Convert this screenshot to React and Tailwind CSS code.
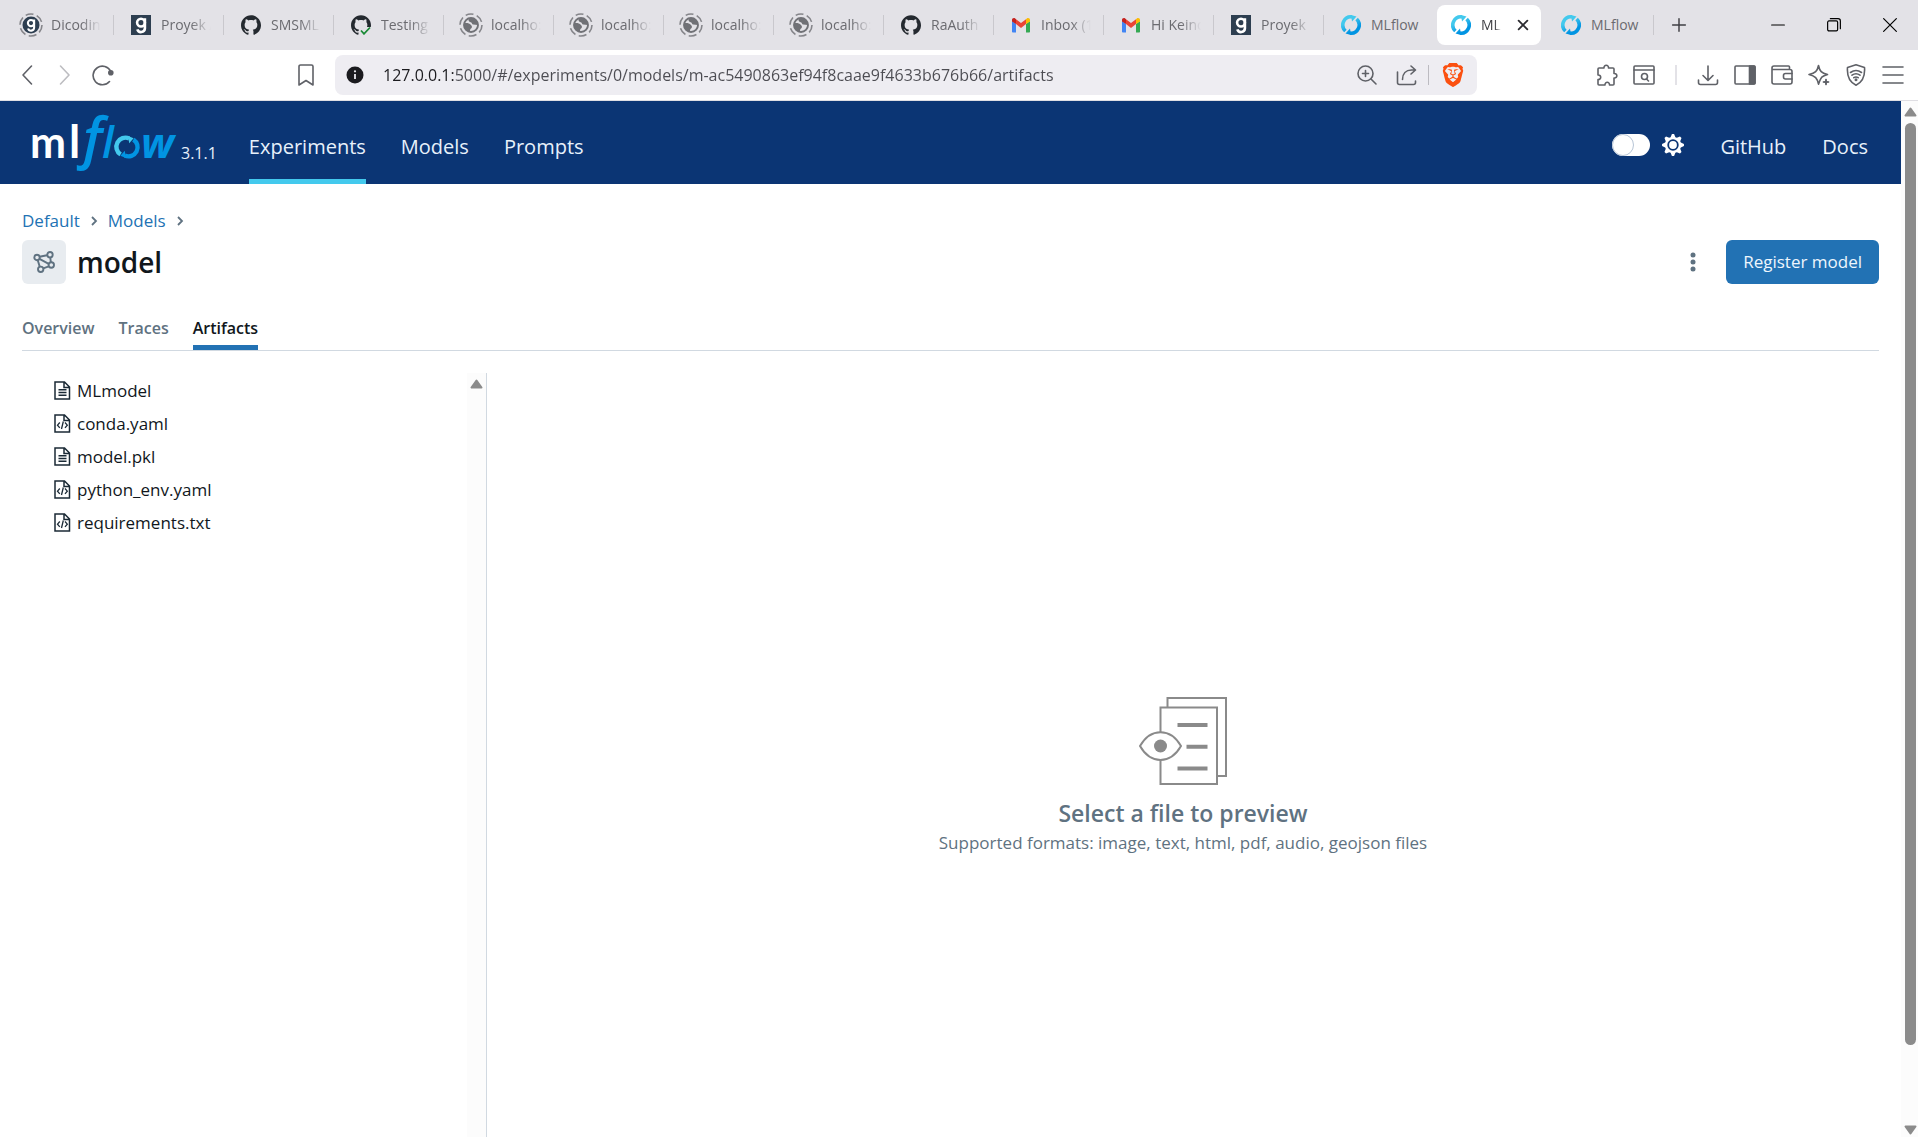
import React, { useId } from "react";
import { SiBrave, SiGithub } from "react-icons/si";

/* ---------- browser tab icons ---------- */

const LoadingRing = () => (
  <circle cx="12" cy="12" r="11" fill="none" stroke="#85858a" strokeWidth="1.6" strokeDasharray="8 3.5" />
);

function DicodingMark() {
  return (
    <g fill="none" stroke="#fff" strokeWidth="2.6">
      <circle cx="10" cy="7.6" r="3.9" />
      <path d="M13.9 3.2v10.2a3.9 3.9 0 0 1-7.6 1" />
    </g>
  );
}

function DicodingIcon() {
  return (
    <svg viewBox="0 0 20 20" className="size-5" aria-hidden="true">
      <rect width="20" height="20" fill="#2d3e50" />
      <DicodingMark />
    </svg>
  );
}

function DicodingLoadingIcon() {
  return (
    <svg viewBox="0 0 24 24" className="size-6" aria-hidden="true">
      <LoadingRing />
      <circle cx="12" cy="12" r="8.5" fill="#2d3e50" />
      <g transform="translate(4 4) scale(0.8)">
        <DicodingMark />
      </g>
    </svg>
  );
}

function GlobeLoadingIcon() {
  return (
    <svg viewBox="0 0 24 24" className="size-6" aria-hidden="true">
      <LoadingRing />
      <circle cx="12" cy="12" r="7" fill="none" stroke="#707176" strokeWidth="1.9" />
      <path d="M11 5c-2.4 1.8-1.6 3.6.8 4.200 1.600.4.800 2 2.400 2.400 1.600.3 3 .2 4.600.3A6.900 6.900 0 0 0 11 5z" fill="#707176" />
      <path d="M5.200 10.500c2-.9 5-.2 6.800 1.400 1.500 1.300 1 2.900 0 3.600-.9.700-.9 1.600-1.200 3.300A7 7 0 0 1 5.200 10.500z" fill="#707176" />
    </svg>
  );
}

const GithubIcon = () => <SiGithub className="size-5 text-[#24292f]" aria-hidden="true" />;

function GithubCheckIcon() {
  return (
    <svg viewBox="0 0 20 20" className="size-5" aria-hidden="true">
      <SiGithub size={20} color="#24292f" />
      <path d="M8 20l2-8h10v8z" fill="#e3e2e7" />
      <path d="M10 15.500l3 3.300 6-6.300" fill="none" stroke="#1a8a36" strokeWidth="1.800" />
    </svg>
  );
}

function GmailIcon() {
  return (
    <svg viewBox="0 0 20 16" className="h-4 w-5" aria-hidden="true">
      <path d="M1 4v10.500c0 .6.500 1 1 1h3V7z" fill="#4285f4" />
      <path d="M19 4v10.500c0 .6-.500 1-1 1h-3V7z" fill="#34a853" />
      <path d="M15 7V2.200l.8-.6C17.200.500 19 1.400 19 3v1.500z" fill="#fbbc04" />
      <path d="M5 7V2.200l-.8-.6C2.800.500 1 1.400 1 3v1.500z" fill="#c5221f" />
      <path d="M5 7V2.200l5 3.900 5-3.900V7l-5 4z" fill="#ea4335" />
    </svg>
  );
}

function MlflowIcon() {
  const id = useId();
  return (
    <svg viewBox="0 0 20 20" className="size-5" aria-hidden="true">
      <defs>
        <linearGradient id={id} gradientUnits="userSpaceOnUse" x1="4" y1="1" x2="14" y2="19">
          <stop offset="0.3" stopColor="#43c9ed" />
          <stop offset="0.8" stopColor="#0194e2" />
        </linearGradient>
      </defs>
      <g fill="none" stroke={`url(#${id})`} strokeWidth="3.600">
        <path d="M4.400 16A8.200 8.200 0 0 1 11 1.900" />
        <path d="M15.600 4A8.200 8.200 0 0 1 9 18.100" />
      </g>
      <path d="M10 0l5.500 1.500-4.500 5z" fill={`url(#${id})`} />
      <path d="M10 20l-5.500-1.500 4.500-5z" fill={`url(#${id})`} />
    </svg>
  );
}

/* ---------- toolbar icons ---------- */

function Icon({ children, className = "size-[22px]", strokeWidth = 1.6 }) {
  return (
    <svg
      viewBox="0 0 22 22"
      className={className}
      fill="none"
      stroke="currentColor"
      strokeWidth={strokeWidth}
      strokeLinecap="round"
      strokeLinejoin="round"
      aria-hidden="true"
    >
      {children}
    </svg>
  );
}

const toolbarActions = [
  ["Extensions", <path d="M2 5a1 1 0 0 1 1-1h5c-.5-3.600 5-3.600 4.500 0H17a1 1 0 0 1 1 1v4.500c3.800-.5 3.800 5 0 4.500V20a1 1 0 0 1-1 1h-3.500c.3-3.600-4.800-3.600-4.500 0H3a1 1 0 0 1-1-1v-4.500c3.600.3 3.600-4.800 0-4.500z" />],
  ["Search tabs", <><rect x="1" y="2" width="20" height="18" rx="1" /><path d="M1 6h20" /><circle cx="11.500" cy="12.500" r="3" /><path d="M13.500 15l2 2" /></>],
  null,
  ["Downloads", <path d="M11 2v14M6 11.500l5 5 5-5M1.500 16v2.500a2 2 0 0 0 2 2h15a2 2 0 0 0 2-2V16" />],
  ["Sidebar", <><rect x="1" y="2" width="20" height="18" rx="1" /><path d="M15.500 2H20a1 1 0 0 1 1 1v16a1 1 0 0 1-1 1h-4.500z" fill="currentColor" /></>],
  ["Wallet", <><path d="M18.500 5.500V3a1 1 0 0 0-1-1H3a2 2 0 0 0-2 2v14a2 2 0 0 0 2 2h16a2 2 0 0 0 2-2V7.500a2 2 0 0 0-2-2H2" /><path d="M21 9.500h-6.500a2 2 0 0 0-2 2V13a2 2 0 0 0 2 2H21" /></>],
  ["Leo AI", <><path d="M10.500 1.500c1.200 5.800 3 7.600 9 9-2.600.7-4.400 1.500-5.700 2.700-1.300 1.400-2 3.300-3.300 7-1.200-6-3.200-8.300-9.500-9.700 6.300-1.400 8.300-3.200 9.500-9z" /><path d="M18 14.500l1 2.500 2.500 1-2.500 1-1 2.500-1-2.500-2.500-1 2.500-1z" fill="currentColor" stroke="none" /><path d="M18 15.500v5M15.500 18h5" /></>],
  ["VPN", <><path d="M11 .800l8.500 2.700c.6 7.500-.5 14-8.500 17.700C3 17.500 1.900 11 2.500 3.500z" /><path d="M5.500 8.500c3.500-2.600 7.500-2.600 11 0M7 11.200c2.600-1.900 5.400-1.900 8 0M8.800 13.700c1.500-1 2.900-1 4.400 0" /><circle cx="11" cy="15.800" r=".7" fill="currentColor" /></>],
  ["Menu", <path d="M1 3h20M1 11h20M1 19h20" />],
];

/* ---------- data ---------- */

const tabs = [
  [DicodingLoadingIcon, "Dicodin"],
  [DicodingIcon, "Proyek A"],
  [GithubIcon, "SMSML"],
  [GithubCheckIcon, "Testing"],
  [GlobeLoadingIcon, "localho:"],
  [GlobeLoadingIcon, "localho:"],
  [GlobeLoadingIcon, "localho:"],
  [GlobeLoadingIcon, "localho:"],
  [GithubIcon, "RaAuth"],
  [GmailIcon, "Inbox (1"],
  [GmailIcon, "Hi Keind"],
  [DicodingIcon, "Proyek"],
  [MlflowIcon, "MLflow", "plain"],
  [MlflowIcon, "ML", "active"],
  [MlflowIcon, "MLflow", "plain"],
];

const files = [
  ["MLmodel", "text"],
  ["conda.yaml", "code"],
  ["model.pkl", "text"],
  ["python_env.yaml", "code"],
  ["requirements.txt", "code"],
];

/* ---------- browser chrome ---------- */

function BrowserTab({ icon: TabIcon, title, kind, divider }) {
  if (kind === "active") {
    return (
      <div className="mx-[3px] flex h-10 w-[104px] min-w-0 items-center rounded-lg bg-white pl-3 text-[#3f3f44]">
        <button className="flex min-w-0 items-center gap-2">
          <span className="grid w-6 shrink-0 place-items-center"><TabIcon /></span>
          <span className="w-5 text-left whitespace-nowrap [mask-image:linear-gradient(to_right,black_70%,transparent)]">{title}</span>
        </button>
        <button aria-label="Close tab" className="ml-2.5 grid size-6 place-items-center text-[#2b2b30]">
          <Icon className="size-4" strokeWidth={2.5}><path d="M5 5l12 12M17 5L5 17" /></Icon>
        </button>
      </div>
    );
  }
  return (
    <div className="flex w-[110px] min-w-0 items-center justify-between">
      <button className="flex min-w-0 items-center gap-2 pl-[15px] text-[#6b6b70]">
        <span className="grid w-6 shrink-0 place-items-center"><TabIcon /></span>
        {kind === "plain" ? (
          <span className="whitespace-nowrap">{title}</span>
        ) : (
          <span className="w-[50px] text-left whitespace-nowrap [mask-image:linear-gradient(to_right,black_60%,transparent)]">{title}</span>
        )}
      </button>
      {divider && <span className="h-5 w-px shrink-0 bg-[#c9c8cd]" />}
    </div>
  );
}

function TabStrip() {
  return (
    <div className="flex h-[50px] shrink-0 items-center justify-between bg-[#e3e2e7] pl-1 text-sm">
      <div className="flex min-w-0 items-center">
        {tabs.map(([icon, title, kind], i) => (
          <BrowserTab key={i} icon={icon} title={title} kind={kind} divider={i !== 12} />
        ))}
        <button aria-label="New tab" className="ml-[13px] grid size-6 place-items-center text-[#3f3f44]">
          <Icon className="size-5"><path d="M11 4v14M4 11h14" /></Icon>
        </button>
      </div>
      <div className="flex text-black">
        <button aria-label="Minimize" className="grid w-14 place-items-center">
          <Icon className="size-5" strokeWidth={1.3}><path d="M4 11h14" /></Icon>
        </button>
        <button aria-label="Restore" className="grid w-14 place-items-center">
          <Icon className="size-5" strokeWidth={1.3}>
            <rect x="4" y="6.500" width="11" height="11" rx="1.500" />
            <path d="M7 4h8.500a2.500 2.500 0 0 1 2.500 2.500V15" />
          </Icon>
        </button>
        <button aria-label="Close" className="grid w-14 place-items-center">
          <Icon className="size-5" strokeWidth={1.3}><path d="M4 4l14 14M18 4L4 18" /></Icon>
        </button>
      </div>
    </div>
  );
}

function Toolbar() {
  return (
    <div className="flex h-[51px] shrink-0 items-center border-b border-[#dfdee3] bg-white pr-3.5 pl-4 text-[#5f6167]">
      <div className="flex items-center gap-4">
        <button aria-label="Back"><Icon><path d="M15.500 2L7 11l8.500 9" /></Icon></button>
        <button aria-label="Forward" className="text-[#bdbdc1]"><Icon><path d="M6.500 2L15 11l-8.500 9" /></Icon></button>
        <button aria-label="Reload">
          <Icon><path d="M17.500 17.500A9.300 9.300 0 1 1 18.800 7.500" /><circle cx="18.800" cy="8.800" r="2" fill="currentColor" /></Icon>
        </button>
      </div>
      <button aria-label="Bookmark" className="ml-[181px]">
        <Icon><path d="M4 2.500a1.500 1.500 0 0 1 1.500-1.500h11A1.500 1.500 0 0 1 18 2.500V21l-7-4.500L4 21z" /></Icon>
      </button>
      <div className="ml-[18px] flex h-10 max-w-[1142px] min-w-0 flex-1 items-center rounded-lg bg-[#eeedf2] pr-3 pl-[11px]">
        <button aria-label="Site information" className="shrink-0">
          <svg viewBox="0 0 18 18" className="size-[18px]" aria-hidden="true">
            <circle cx="9" cy="9" r="8.500" fill="#1b1b1f" />
            <path d="M9 8v5" stroke="#eeedf2" strokeWidth="1.800" />
            <circle cx="9" cy="5.300" r="1.100" fill="#eeedf2" />
          </svg>
        </button>
        <input
          aria-label="Address"
          type="text"
          defaultValue="127.0.0.1:5000/#/experiments/0/models/m-ac5490863ef94f8caae9f4633b676b66/artifacts"
          className="ml-[19px] h-8 min-w-0 flex-1 bg-[linear-gradient(to_right,#1b1b1f_72px,#4c4c52_72px)] bg-clip-text text-base text-transparent outline-none"
        />
        <div className="flex shrink-0 items-center gap-[18px]">
          <button aria-label="Zoom"><Icon><circle cx="9.500" cy="9.500" r="7.500" /><path d="M15 15l5 5M9.500 6.500v6M6.500 9.500h6" /></Icon></button>
          <div className="flex items-center gap-2.5">
            <button aria-label="Share"><Icon><path d="M1.500 8v10.500a2 2 0 0 0 2 2h14a2 2 0 0 0 2-2V17M6.500 15.500c0-6 3.500-9.500 9-9.500h3.500M15 2l4.500 4-4.500 4" /></Icon></button>
            <span className="h-5 w-px bg-[#bcbbc1]" />
          </div>
          <button aria-label="Brave Shields" className="-ml-1.5 grid place-items-center">
            <SiBrave className="size-6 text-[#fb5010]" aria-hidden="true" />
          </button>
        </div>
      </div>
      <div className="ml-auto flex items-center gap-[15px] pl-4">
        {toolbarActions.map((action, i) =>
          action ? (
            <button key={i} aria-label={action[0]}><Icon>{action[1]}</Icon></button>
          ) : (
            <span key={i} className="mx-[5px] h-5 w-0.5 bg-[#e3e2e7]" />
          )
        )}
      </div>
    </div>
  );
}

/* ---------- MLflow application ---------- */

function MlflowLogo() {
  return (
    <svg viewBox="-5 -5 151 70" className="h-[70px] w-[151px] overflow-visible" role="img" aria-label="mlflow">
      <text x="-3" y="45" fill="#fff" fontFamily="Lato" fontWeight="700" fontSize="43">m</text>
      <text x="36" y="45" fill="#fff" fontFamily="Lato" fontWeight="700" fontSize="45">l</text>
      <text x="50" y="45" fill="#0194e2" fontFamily="Open Sans" fontStyle="italic" fontWeight="600" fontSize="56">f</text>
      <text x="69" y="45" fill="#0194e2" fontFamily="Open Sans" fontStyle="italic" fontWeight="600" fontSize="43">l</text>
      <g transform="translate(83 23) scale(1.100)" fill="none" strokeWidth="4">
        <path d="M4.200 16.800A8.300 8.300 0 0 1 12 2.200" stroke="#43c9ed" />
        <path d="M15.800 3.200A8.300 8.300 0 0 1 8 17.800" stroke="#0194e2" />
        <path d="M11 0l5 2-4 4.500z" fill="#43c9ed" />
        <path d="M9 20l-5-2 4-4.500z" fill="#0194e2" />
      </g>
      <text x="108" y="45" fill="#0194e2" fontFamily="Open Sans" fontStyle="italic" fontWeight="700" fontSize="42">w</text>
    </svg>
  );
}

function GearIcon() {
  const points = Array.from({ length: 32 }, (_, i) => {
    const r = i % 4 < 2 ? 11 : 8.2;
    const a = ((i - 0.5) * Math.PI) / 16;
    return `${(11 + r * Math.sin(a)).toFixed(2)},${(11 - r * Math.cos(a)).toFixed(2)}`;
  }).join(" ");
  return (
    <svg viewBox="0 0 22 22" className="size-[22px]" aria-hidden="true">
      <polygon points={points} fill="#fff" />
      <circle cx="11" cy="11" r="4.800" fill="#fff" stroke="#0b3574" strokeWidth="1.800" />
    </svg>
  );
}

function AppHeader() {
  return (
    <header className="flex h-[83px] shrink-0 items-center justify-between bg-[#0b3574] pr-[33px] pl-7 text-xl text-[#e7f1fb]">
      <div className="flex h-full items-center">
        <a href="#/" className="flex items-end gap-0.5">
          <MlflowLogo />
          <span className="pb-[13px] text-base">3.1.1</span>
        </a>
        <nav className="ml-8 flex h-full gap-[35px]">
          <a href="#/experiments" className="flex h-full items-center border-y-[5px] border-t-transparent border-b-[#43c9ed] pt-2">Experiments</a>
          <a href="#/models" className="flex h-full items-center pt-2">Models</a>
          <a href="#/prompts" className="flex h-full items-center pt-2">Prompts</a>
        </nav>
      </div>
      <div className="flex items-center gap-9 pt-2">
        <label className="flex items-center gap-3 pb-1">
          <input
            type="checkbox"
            role="switch"
            aria-label="Dark theme"
            className="h-[22px] w-[38px] appearance-none rounded-full bg-white before:block before:size-[22px] before:rounded-full before:border before:border-[#b7c5d6] before:bg-white"
          />
          <GearIcon />
        </label>
        <a href="#/github">GitHub</a>
        <a href="#/docs">Docs</a>
      </div>
    </header>
  );
}

function Chevron() {
  return (
    <svg viewBox="0 0 10 10" className="size-2.5 text-[#5f7281]" fill="none" stroke="currentColor" strokeWidth="1.800" aria-hidden="true">
      <path d="M3 1l4 4-4 4" />
    </svg>
  );
}

function ModelIcon() {
  return (
    <span className="grid size-11 shrink-0 place-items-center rounded-md bg-[#e8ecf0] text-[#5f7281]">
      <svg viewBox="0 0 22 22" className="size-[22px]" fill="none" stroke="currentColor" strokeWidth="1.900" aria-hidden="true">
        <path d="M6.500 5.800l7.500-1.500M17.200 6.500l.7 4.700M6.500 7.800l9.200 5M4.700 9l2 6.600M10.300 17.400l5.400-2" />
        <circle cx="4" cy="6.500" r="2.700" />
        <circle cx="17" cy="3.700" r="2.700" />
        <circle cx="18.300" cy="14" r="2.700" />
        <circle cx="7.700" cy="18.300" r="2.700" />
      </svg>
    </span>
  );
}

function FileIcon({ kind }) {
  return (
    <svg viewBox="0 0 17 19" className="h-[19px] w-[17px]" fill="none" stroke="#1b2a36" strokeWidth="1.500" aria-hidden="true">
      <path d="M1 1h9.500l5 5v12H1zM10 1v5.500h5.500" />
      {kind === "text" ? (
        <path d="M4.500 8.700h8M4.500 11.500h8M4.500 14.300h8" />
      ) : (
        <path d="M5.800 8.500L3.500 11.200l2.300 2.700M11 8.500l2.300 2.700-2.300 2.700M9.300 7.500l-1.800 7.500" strokeWidth="1.300" />
      )}
    </svg>
  );
}

function PreviewIcon() {
  return (
    <svg viewBox="0 0 88 88" className="size-[88px]" fill="none" stroke="#8a8a8a" strokeWidth="2" aria-hidden="true">
      <path d="M28.500 10V1H87v78H78" />
      <path d="M21.500 35V10.500H78V87H21.500V63" />
      <path d="M1 49C11.500 30.500 31.500 30.500 42 49 31.500 67.500 11.500 67.500 1 49z" />
      <circle cx="21.500" cy="49" r="6.500" fill="#8a8a8a" stroke="none" />
      <path d="M38.500 28H68.500M47.500 49.800H68.500M38.500 71.500H68.500" strokeWidth="4" />
    </svg>
  );
}

const Arrow = ({ down }) => (
  <svg viewBox="0 0 13 10" className="h-2.5 w-[13px] shrink-0" fill="#8b8b8b" stroke="#8b8b8b" strokeWidth="2" strokeLinejoin="round" aria-hidden="true">
    <path d={down ? "M1.500 1.500h10L6.500 8.500z" : "M1.500 8.500h10L6.500 1.500z"} />
  </svg>
);

function PageScrollbar() {
  return (
    <div className="flex w-[17px] shrink-0 flex-col items-center bg-[#fcfcfc] pt-1.5 pb-0.5 pl-0.5" aria-hidden="true">
      <Arrow />
      <div className="flex min-h-0 w-[11px] flex-1 flex-col pt-1.5">
        <div className="h-[92%] rounded-full bg-[#8b8b8b]" />
      </div>
      <Arrow down />
    </div>
  );
}

function ArtifactBrowser() {
  return (
    <div className="mt-[22px] flex min-h-0 flex-1">
      <div className="flex w-[465px] shrink-0 justify-between border-r border-[#d1d9e1]">
        <ul className="pt-px pl-8">
          {files.map(([name, kind]) => (
            <li key={name}>
              <button className="flex h-[33px] items-center gap-1.5 text-[#11171c]">
                <FileIcon kind={kind} />
                {name}
              </button>
            </li>
          ))}
        </ul>
        <div className="flex w-[19px] justify-center bg-[#fcfcfc] pt-1.5" aria-hidden="true">
          <Arrow />
        </div>
      </div>
      <div className="flex min-w-0 flex-1 flex-col items-center justify-center pt-11 text-center text-[#5f7281]">
        <PreviewIcon />
        <h3 className="mt-3 text-[23px] leading-8 font-semibold">Select a file to preview</h3>
        <p className="leading-7">Supported formats: image, text, html, pdf, audio, geojson files</p>
      </div>
    </div>
  );
}

function ModelPage() {
  return (
    <main className="flex min-h-0 flex-1 flex-col px-[22px] pt-[25px] text-[17px] leading-6">
      <nav aria-label="Breadcrumb" className="flex items-center gap-[9px] text-[#2272b4]">
        <a href="#/experiments/0">Default</a>
        <Chevron />
        <a href="#/experiments/0/models">Models</a>
        <Chevron />
      </nav>
      <div className="mt-[7px] flex items-center justify-between">
        <div className="flex items-center gap-[11px]">
          <ModelIcon />
          <h1 className="text-[28px] leading-9 font-semibold text-[#11171c]">model</h1>
        </div>
        <div className="flex items-center gap-[22px]">
          <button aria-label="More actions" className="grid size-[22px] place-items-center text-[#5f7281]">
            <svg viewBox="0 0 6 20" className="h-5 w-1.5" fill="currentColor" aria-hidden="true">
              <circle cx="3" cy="3" r="2.500" />
              <circle cx="3" cy="10" r="2.500" />
              <circle cx="3" cy="17" r="2.500" />
            </svg>
          </button>
          <button className="h-11 rounded-md bg-[#2272b4] px-[17px] text-[#eef6fd]">Register model</button>
        </div>
      </div>
      <div role="tablist" className="mt-8 flex gap-6 border-b border-[#d1d9e1] text-base leading-6 font-semibold text-[#5f7281]">
        <button role="tab" aria-selected="false" className="pb-[10px]">Overview</button>
        <button role="tab" aria-selected="false" className="pb-[10px]">Traces</button>
        <button role="tab" aria-selected="true" className="border-b-[5px] border-[#2272b4] pb-[5px] text-[#11171c]">Artifacts</button>
      </div>
      <ArtifactBrowser />
    </main>
  );
}

export default function App() {
  return (
    <div className="flex h-screen flex-col overflow-hidden bg-white font-['Open_Sans',sans-serif]">
      <TabStrip />
      <Toolbar />
      <div className="flex min-h-0 flex-1">
        <div className="flex min-w-0 flex-1 flex-col">
          <AppHeader />
          <ModelPage />
        </div>
        <PageScrollbar />
      </div>
    </div>
  );
}
